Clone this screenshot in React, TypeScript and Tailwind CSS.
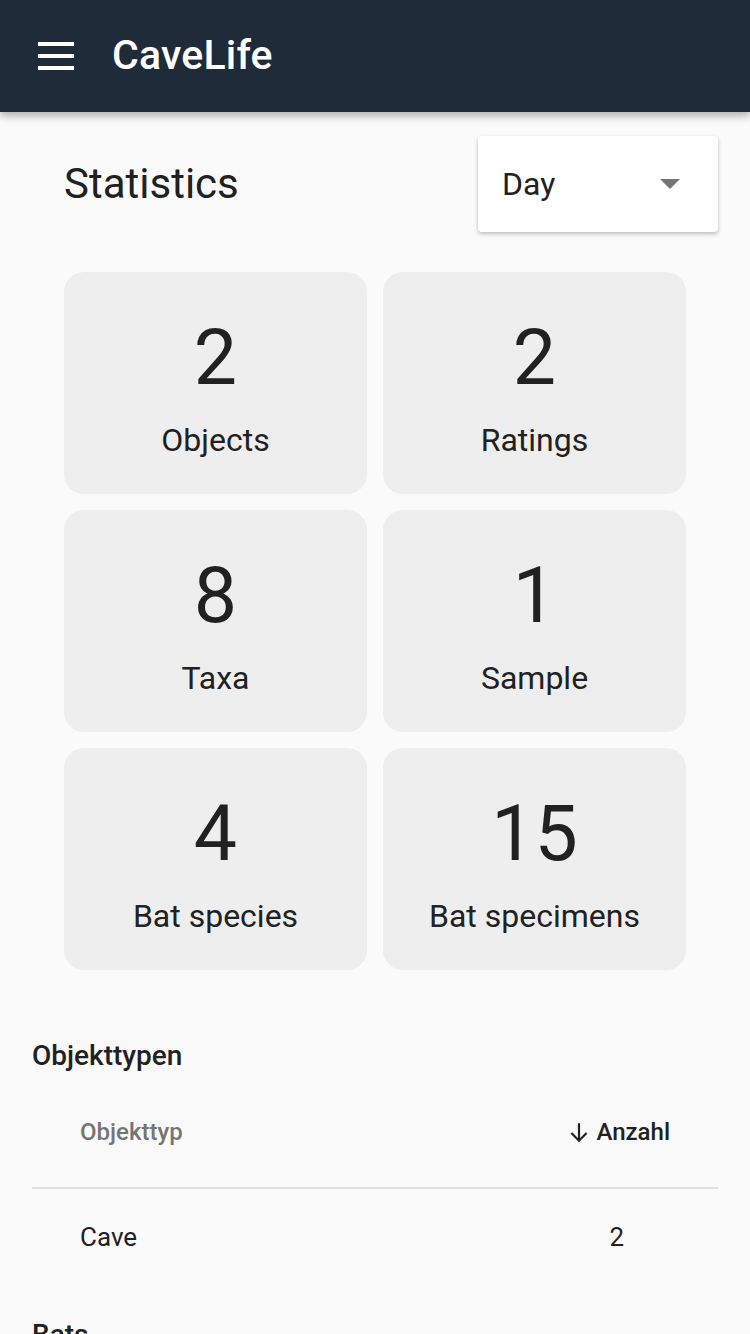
const STATS = [
  { value: "2", label: "Objects" },
  { value: "2", label: "Ratings" },
  { value: "8", label: "Taxa" },
  { value: "1", label: "Sample" },
  { value: "4", label: "Bat species" },
  { value: "15", label: "Bat specimens" },
];

export default function App() {
  return (
    <div
      className="min-h-[1334px] w-[750px] overflow-hidden bg-[#fafafa] text-[#212121]"
      style={{ fontFamily: "Roboto, 'Noto Sans', sans-serif" }}
    >
      {/* App bar */}
      <header className="relative z-10 flex h-[112px] items-center bg-[#1f2b38] pl-[38px] shadow-[0_4px_8px_rgba(0,0,0,0.3)]">
        <div className="flex w-[36px] flex-col gap-[8px]">
          <span className="h-[4px] w-full bg-white" />
          <span className="h-[4px] w-full bg-white" />
          <span className="h-[4px] w-full bg-white" />
        </div>
        <h1 className="ml-[38px] text-[41px] font-medium tracking-[0.2px] text-white">CaveLife</h1>
      </header>

      {/* Title + period select */}
      <div className="flex items-start justify-between pt-[24px] pr-[32px] pl-[64px]">
        <h2 className="mt-[24px] text-[42px] leading-[48px] font-normal">Statistics</h2>
        <div className="flex h-[96px] w-[240px] items-center justify-between rounded-[4px] bg-white pr-[38px] pl-[24px] shadow-[0_2px_4px_rgba(0,0,0,0.25)]">
          <span className="text-[32px]">Day</span>
          <span className="h-0 w-0 border-x-[10px] border-t-[10px] border-x-transparent border-t-[#757575]" />
        </div>
      </div>

      {/* Stat cards */}
      <div className="mt-[40px] grid grid-cols-2 gap-[16px] pr-[64px] pl-[64px]">
        {STATS.map((s) => (
          <div
            key={s.label}
            className="flex h-[222px] flex-col items-center rounded-[20px] bg-[#eeeeee] pt-[41px]"
          >
            <span className="text-[77px] leading-[90px]">{s.value}</span>
            <span className="mt-[17px] text-[32px] leading-[40px]">{s.label}</span>
          </div>
        ))}
      </div>

      {/* Objekttypen table */}
      <section className="mt-[70px] px-[32px]">
        <h3 className="text-[28px] leading-[32px] font-medium">Objekttypen</h3>
        <div className="mt-[25px] flex h-[92px] items-center border-b-2 border-[#e0e0e0] pr-[48px] pb-[20px] pl-[48px]">
          <span className="flex-1 text-[24px] font-medium text-[#757575]">Objekttyp</span>
          <span className="flex items-center gap-[4px] text-[24px] font-medium">
            <svg width="26" height="26" viewBox="0 0 24 24" fill="none" stroke="#212121" strokeWidth="2">
              <path d="M12 4v16M5 13l7 7 7-7" />
            </svg>
            Anzahl
          </span>
        </div>
        <div className="flex h-[96px] items-center pr-[94px] pl-[48px]">
          <span className="flex-1 text-[26px]">Cave</span>
          <span className="text-[26px]">2</span>
        </div>
        <h3 className="mt-[34px] text-[28px] leading-[32px] font-medium">Bats</h3>
      </section>
    </div>
  );
}
